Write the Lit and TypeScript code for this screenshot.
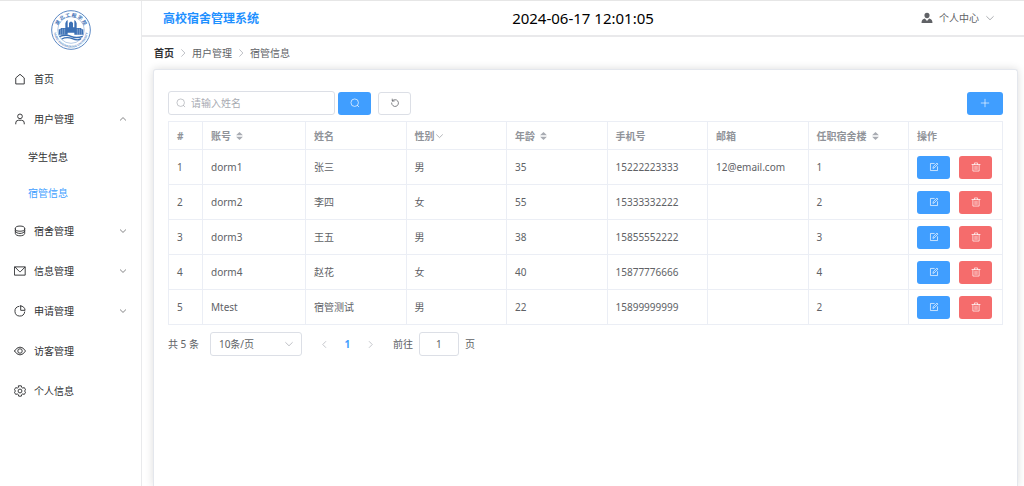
import { LitElement, html, svg, css, nothing } from "lit";
import { customElement, property, state } from "lit/decorators.js";
import { classMap } from "lit/directives/class-map.js";

const line = (d: string, width = 64) => svg`<path d=${d} fill="none" stroke="currentColor" stroke-width=${width} stroke-linecap="round" stroke-linejoin="round" />`;
const solid = (d: string) => svg`<path d=${d} fill="currentColor" />`;

const ICONS: Record<string, unknown> = {
  home: line("M150 900V420L512 110L874 420V900Z", 80),
  user: svg`<circle cx="512" cy="288" r="200" fill="none" stroke="currentColor" stroke-width="80" />${line("M150 930V850A230 230 0 0 1 380 620H644A230 230 0 0 1 874 850V930", 80)}`,
  coin: svg`<ellipse cx="512" cy="310" rx="400" ry="220" fill="none" stroke="currentColor" stroke-width="80" />${line("M112 310V714C112 840 300 924 512 924S912 840 912 714V310M112 512C150 650 320 720 512 720S874 650 912 512", 80)}`,
  message: line("M70 160H954V864H70ZM90 180L460 560Q512 610 564 560L934 180", 80),
  pie: line("M430 110A420 420 0 1 0 914 594M570 80V454H944A374 374 0 0 0 570 80Z", 80),
  view: svg`${line("M40 512Q240 180 512 180T984 512Q784 844 512 844T40 512Z", 80)}<circle cx="512" cy="512" r="190" fill="none" stroke="currentColor" stroke-width="80" />`,
  setting: svg`${line("M400 70H624L660 210L745 260L880 222L990 412L890 512L990 612L880 802L745 764L660 814L624 954H400L364 814L279 764L144 802L34 612L134 512L34 412L144 222L279 260L364 210Z", 80)}<circle cx="512" cy="512" r="165" fill="none" stroke="currentColor" stroke-width="80" />`,
  down: line("M171 362L512 694L853 362", 76),
  up: line("M171 662L512 330L853 662", 76),
  left: line("M650 171L318 512L650 853", 76),
  right: line("M374 171L706 512L374 853", 76),
  search: svg`<circle cx="480" cy="480" r="384" fill="none" stroke="currentColor" stroke-width="70" />${line("M760 760L900 900", 70)}`,
  refresh: line("M230 310A350 350 0 1 1 162 512M230 110V310H430", 80),
  plus: line("M512 128V896M128 512H896"),
  edit: line("M540 150H150V874H874V484M410 614L440 470L810 110L914 214L554 584Z", 70),
  trash: line("M96 256H928M352 256V96H672V256M192 256V928H832V256M416 416V768M608 416V768", 70),
  avatar: solid("M512 70A220 220 0 0 1 732 290C732 420 640 530 512 530S292 420 292 290A220 220 0 0 1 512 70ZM330 560L512 760L694 560C860 590 980 700 980 940H44C44 700 164 590 330 560Z"),
  sort: svg`${solid("M512 70L900 440H124Z")}${solid("M512 954L900 584H124Z")}`,
};

@customElement("ui-icon")
export class UiIcon extends LitElement {
  static styles = css`
    :host {
      display: inline-flex;
      width: 12px;
      height: 12px;
      flex: none;
    }
    .glyph {
      width: 100%;
      height: 100%;
      display: block;
    }
  `;

  @property() name = "";

  render() {
    return html`<svg class="glyph" viewBox="0 0 1024 1024" aria-hidden="true">${ICONS[this.name] ?? nothing}</svg>`;
  }
}

@customElement("school-logo")
export class SchoolLogo extends LitElement {
  static styles = css`
    :host {
      display: block;
      width: 40px;
      height: 40px;
    }
    .badge {
      width: 100%;
      height: 100%;
      display: block;
    }
    .name {
      font-family: "Noto Sans CJK SC", sans-serif;
      font-size: 14px;
      font-weight: 700;
      fill: #3b70b5;
    }
    .latin {
      font-family: "Open Sans", sans-serif;
      font-size: 9px;
      font-weight: 700;
      fill: #6f97cc;
    }
  `;

  render() {
    return html`
      <svg class="badge" viewBox="0 0 120 120" role="img" aria-label="校徽">
        <defs>
          <path id="top" d="M18 62A42 42 0 0 1 102 62" />
          <path id="bottom" d="M9 62A51 51 0 0 0 111 62" />
        </defs>
        <circle cx="60" cy="60" r="58" fill="#fff" stroke="#5b88c4" stroke-width="3" />
        <circle cx="60" cy="60" r="40" fill="none" stroke="#8fb0da" stroke-width="2" />
        <text class="name" text-anchor="middle"><textPath href="#top" startOffset="50%">湖 北 工 程 学 院</textPath></text>
        <text class="latin" text-anchor="middle"><textPath href="#bottom" startOffset="50%">HUBEI ENGINEERING UNIVERSITY</textPath></text>
        <path fill="#3b70b5" d="M23 74V58H29V54H43V40L46 33L50 30V52H54V40L57 35H63L66 40V52H70V30L74 33L77 40V54H91V58H97V74H70V68H50V74Z" />
        <path stroke="#fff" stroke-width="1" d="M29 60V74M35 56V74M41 56V74M79 56V74M85 56V74M91 60V74" />
        <path fill="none" stroke="#3b70b5" stroke-width="4" d="M25 80Q44 72 60 79T95 79M32 87Q48 79 64 86T90 86" />
      </svg>
    `;
  }
}

interface MenuEntry {
  label: string;
  icon: string;
  children?: string[];
}

const MENU: MenuEntry[] = [
  { label: "首页", icon: "home" },
  { label: "用户管理", icon: "user", children: ["学生信息", "宿管信息"] },
  { label: "宿舍管理", icon: "coin", children: [] },
  { label: "信息管理", icon: "message", children: [] },
  { label: "申请管理", icon: "pie", children: [] },
  { label: "访客管理", icon: "view" },
  { label: "个人信息", icon: "setting" },
];

interface Manager {
  account: string;
  name: string;
  gender: string;
  age: number;
  phone: string;
  email: string;
  building: number;
}

const MANAGERS: Manager[] = [
  { account: "dorm1", name: "张三", gender: "男", age: 35, phone: "15222223333", email: "12@email.com", building: 1 },
  { account: "dorm2", name: "李四", gender: "女", age: 55, phone: "15333332222", email: "", building: 2 },
  { account: "dorm3", name: "王五", gender: "男", age: 38, phone: "15855552222", email: "", building: 3 },
  { account: "dorm4", name: "赵花", gender: "女", age: 40, phone: "15877776666", email: "", building: 4 },
  { account: "Mtest", name: "宿管测试", gender: "男", age: 22, phone: "15899999999", email: "", building: 2 },
];

@customElement("app-root")
export class AppRoot extends LitElement {
  static styles = css`
    :host {
      display: grid;
      grid-template-columns: 142px minmax(0, 1fr);
      height: 100vh;
      overflow: hidden;
      box-sizing: border-box;
      border-top: 1px solid #e6e6e6;
      background: #fff;
      color: #606266;
      font-family: "Noto Sans", "Noto Sans CJK SC", sans-serif;
      font-size: 10px;
      line-height: 16px;
    }
    *,
    *::before {
      box-sizing: border-box;
    }
    button,
    input,
    select {
      font: inherit;
      color: inherit;
      margin: 0;
      padding: 0;
    }
    button {
      cursor: pointer;
      border: 0;
      background: none;
    }
    a {
      color: inherit;
      text-decoration: none;
    }

    .sidebar {
      border-right: 1px solid #e9eaec;
      color: #303133;
    }
    .brand {
      display: flex;
      justify-content: center;
      height: 58px;
      padding-top: 9px;
    }
    .menu,
    .submenu {
      list-style: none;
      margin: 0;
      padding: 0;
    }
    .entry {
      display: flex;
      align-items: center;
      gap: 8px;
      width: 100%;
      height: 40px;
      padding: 0 14px;
      text-align: left;
    }
    .entry ui-icon {
      width: 12px;
      height: 12px;
    }
    .entry .fold {
      width: 8px;
      height: 8px;
      margin-left: auto;
    }
    .subentry {
      display: flex;
      align-items: center;
      height: 36px;
      padding-left: 28px;
    }
    .subentry.active {
      color: #409eff;
    }

    .page {
      display: flex;
      flex-direction: column;
      min-width: 0;
    }
    .topbar {
      display: grid;
      grid-template-columns: 1fr auto 1fr;
      align-items: center;
      flex: none;
      height: 36px;
      padding: 0 21px;
      border-bottom: 2px solid #e9e9eb;
    }
    .title {
      margin: 0;
      padding-top: 2px;
      font-size: 12px;
      line-height: 16px;
      font-weight: 700;
      color: #1e90ff;
    }
    .clock {
      font-size: 15px;
      line-height: 20px;
      color: #000;
    }
    .account {
      display: flex;
      align-items: center;
      gap: 6px;
      justify-self: end;
      margin-right: 8px;
    }
    .account .more {
      width: 10px;
      height: 10px;
      color: #909399;
    }

    .crumbs {
      display: flex;
      align-items: center;
      gap: 4px;
      flex: none;
      height: 32px;
      padding-left: 12px;
    }
    .crumbs .home {
      font-weight: 700;
      color: #303133;
    }
    .crumbs ui-icon {
      width: 10px;
      height: 10px;
      color: #a8abb2;
    }

    .card {
      flex: 1;
      margin: 0 6px 0 11px;
      padding: 21px 14px;
      border: 1px solid #e4e7ed;
      border-bottom: 0;
      border-radius: 3px 3px 0 0;
      background: #fff;
      box-shadow: 0 0 9px rgba(0, 0, 0, 0.14);
    }
    .tools {
      display: flex;
      align-items: center;
      margin-bottom: 6px;
    }
    .search {
      display: flex;
      align-items: center;
      gap: 5px;
      width: 167px;
      height: 24px;
      padding: 0 7px;
      border: 1px solid #dcdfe6;
      border-radius: 3px;
      color: #a8abb2;
    }
    .search ui-icon {
      width: 10px;
      height: 10px;
    }
    .search .field {
      flex: 1;
      min-width: 0;
      border: 0;
      outline: 0;
      background: none;
      color: #606266;
    }
    .field::placeholder {
      color: #a8abb2;
      opacity: 1;
    }
    .btn {
      display: inline-flex;
      align-items: center;
      justify-content: center;
      width: 33px;
      height: 23px;
      border-radius: 3px;
      background: #409eff;
      color: #fff;
    }
    .btn ui-icon {
      width: 10px;
      height: 10px;
    }
    .btn.find {
      margin: 0 7px 0 3px;
    }
    .btn.plain {
      border: 1px solid #dcdfe6;
      background: #fff;
      color: #606266;
    }
    .btn.add {
      width: 36px;
      margin-left: auto;
    }
    .btn.danger {
      background: #f56c6c;
    }

    .table {
      width: 100%;
      table-layout: fixed;
      border-collapse: collapse;
    }
    .table th,
    .table td {
      height: 35px;
      padding: 0 8px;
      border: 1px solid #ebeef5;
      text-align: left;
      white-space: nowrap;
    }
    .table th {
      height: 28px;
      color: #909399;
      font-weight: 700;
    }
    .col-index {
      width: 34px;
    }
    .col-account {
      width: 103px;
    }
    .col-actions {
      width: 94px;
    }
    .head {
      display: flex;
      align-items: center;
    }
    .sorter {
      display: inline-flex;
      margin-left: 4px;
      color: #a8abb2;
    }
    .sorter ui-icon,
    .filter ui-icon {
      width: 9px;
      height: 10px;
    }
    .filter {
      display: inline-flex;
      color: #909399;
    }
    .actions {
      display: flex;
      gap: 9px;
    }

    .pager {
      display: flex;
      align-items: center;
      margin-top: 7px;
    }
    .size {
      display: grid;
      align-items: center;
      width: 92px;
      height: 24px;
      margin: 0 11px;
    }
    .size .choice,
    .size ui-icon {
      grid-area: 1 / 1;
    }
    .size .choice {
      width: 100%;
      height: 100%;
      padding: 0 8px;
      border: 1px solid #dcdfe6;
      border-radius: 3px;
      appearance: none;
      background: #fff;
    }
    .size ui-icon {
      justify-self: end;
      width: 10px;
      height: 10px;
      margin-right: 8px;
      color: #a8abb2;
      pointer-events: none;
    }
    .step {
      display: inline-flex;
      align-items: center;
      justify-content: center;
      width: 23px;
      height: 23px;
      color: #a8abb2;
    }
    .step.current {
      color: #409eff;
      font-weight: 700;
    }
    .step ui-icon {
      width: 9px;
      height: 9px;
    }
    .jump {
      display: flex;
      align-items: center;
      gap: 6px;
      margin-left: 11px;
    }
    .jump .number {
      width: 40px;
      height: 24px;
      border: 1px solid #dcdfe6;
      border-radius: 3px;
      text-align: center;
    }
  `;

  @state() private active = "宿管信息";
  @state() private open = "用户管理";

  private toggle(label: string) {
    this.open = this.open === label ? "" : label;
  }

  private renderEntry(item: MenuEntry) {
    if (!item.children) {
      return html`<li><a class="entry" href="#"><ui-icon name=${item.icon}></ui-icon>${item.label}</a></li>`;
    }
    const opened = this.open === item.label;
    return html`
      <li>
        <button class="entry" aria-expanded=${opened} @click=${() => this.toggle(item.label)}>
          <ui-icon name=${item.icon}></ui-icon>${item.label}
          <ui-icon class="fold" name=${opened ? "up" : "down"}></ui-icon>
        </button>
        ${opened
          ? html`<ul class="submenu">
              ${item.children.map(
                (child) => html`<li>
                  <a
                    class=${classMap({ subentry: true, active: child === this.active })}
                    href="#"
                    @click=${() => (this.active = child)}
                    >${child}</a
                  >
                </li>`
              )}
            </ul>`
          : nothing}
      </li>
    `;
  }

  private sortHead(label: string) {
    return html`<span class="head"
      >${label}<button class="sorter" aria-label="${label}排序"><ui-icon name="sort"></ui-icon></button
    ></span>`;
  }

  private renderRow(row: Manager, index: number) {
    return html`
      <tr>
        <td>${index + 1}</td>
        <td>${row.account}</td>
        <td>${row.name}</td>
        <td>${row.gender}</td>
        <td>${row.age}</td>
        <td>${row.phone}</td>
        <td>${row.email}</td>
        <td>${row.building}</td>
        <td>
          <div class="actions">
            <button class="btn" aria-label="编辑"><ui-icon name="edit"></ui-icon></button>
            <button class="btn danger" aria-label="删除"><ui-icon name="trash"></ui-icon></button>
          </div>
        </td>
      </tr>
    `;
  }

  render() {
    return html`
      <nav class="sidebar">
        <div class="brand"><school-logo></school-logo></div>
        <ul class="menu">
          ${MENU.map((item) => this.renderEntry(item))}
        </ul>
      </nav>
      <div class="page">
        <header class="topbar">
          <h1 class="title">高校宿舍管理系统</h1>
          <time class="clock">2024-06-17 12:01:05</time>
          <button class="account">
            <ui-icon name="avatar"></ui-icon>个人中心<ui-icon class="more" name="down"></ui-icon>
          </button>
        </header>
        <nav class="crumbs" aria-label="面包屑">
          <a class="home" href="#">首页</a>
          <ui-icon name="right"></ui-icon>
          <span>用户管理</span>
          <ui-icon name="right"></ui-icon>
          <span>宿管信息</span>
        </nav>
        <main class="card">
          <div class="tools">
            <label class="search">
              <ui-icon name="search"></ui-icon>
              <input class="field" type="text" placeholder="请输入姓名" aria-label="姓名" />
            </label>
            <button class="btn find" aria-label="搜索"><ui-icon name="search"></ui-icon></button>
            <button class="btn plain" aria-label="重置"><ui-icon name="refresh"></ui-icon></button>
            <button class="btn add" aria-label="新增"><ui-icon name="plus"></ui-icon></button>
          </div>
          <table class="table">
            <colgroup>
              <col class="col-index" />
              <col class="col-account" />
              <col span="6" />
              <col class="col-actions" />
            </colgroup>
            <thead>
              <tr>
                <th>#</th>
                <th>${this.sortHead("账号")}</th>
                <th>姓名</th>
                <th>
                  <span class="head"
                    >性别<button class="filter" aria-label="性别筛选"><ui-icon name="down"></ui-icon></button
                  ></span>
                </th>
                <th>${this.sortHead("年龄")}</th>
                <th>手机号</th>
                <th>邮箱</th>
                <th>${this.sortHead("任职宿舍楼")}</th>
                <th>操作</th>
              </tr>
            </thead>
            <tbody>
              ${MANAGERS.map((row, index) => this.renderRow(row, index))}
            </tbody>
          </table>
          <div class="pager">
            <span>共 5 条</span>
            <div class="size">
              <select class="choice" aria-label="每页条数">
                <option>10条/页</option>
                <option>20条/页</option>
              </select>
              <ui-icon name="down"></ui-icon>
            </div>
            <button class="step" aria-label="上一页"><ui-icon name="left"></ui-icon></button>
            <button class="step current">1</button>
            <button class="step" aria-label="下一页"><ui-icon name="right"></ui-icon></button>
            <label class="jump">前往<input class="number" type="text" inputmode="numeric" value="1" />页</label>
          </div>
        </main>
      </div>
    `;
  }
}
